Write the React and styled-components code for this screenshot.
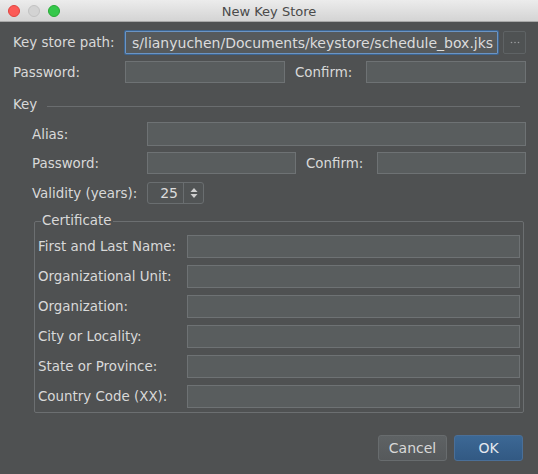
import React from "react";
import styled, { createGlobalStyle } from "styled-components";

const Global = createGlobalStyle`
  html, body { margin: 0; padding: 0; background: #4f5152; }
  * { box-sizing: border-box; }
`;

const Window = styled.div`
  width: 538px;
  height: 474px;
  background: #4f5152;
  display: flex;
  flex-direction: column;
  font-family: "DejaVu Sans", "Liberation Sans", sans-serif;
  font-size: 13.4px;
  color: #d9d9d9;
  overflow: hidden;
`;

const TitleBar = styled.div`
  height: 22px;
  flex: none;
  display: flex;
  align-items: center;
  background: linear-gradient(#ececec, #d4d4d4);
  border-bottom: 1px solid #a8a8a8;
`;

const Lights = styled.div`
  display: flex;
  gap: 8px;
  padding-left: 8px;
`;

const Light = styled.span`
  width: 12px;
  height: 12px;
  border-radius: 50%;
  background: ${(p) => p.$c};
  border: 0.5px solid ${(p) => p.$b};
`;

const Title = styled.div`
  flex: 1;
  text-align: center;
  font-size: 13px;
  color: #4a4a4a;
  margin-right: 60px;
  padding-top: 1px;
`;

const Body = styled.div`
  flex: 1;
  display: flex;
  flex-direction: column;
  padding: 8px 12px 0 13px;
`;

const Row = styled.div`
  display: flex;
  align-items: center;
  height: ${(p) => p.$h || 23}px;
  margin-top: ${(p) => p.$mt || 0}px;
`;

const Label = styled.label`
  width: ${(p) => p.$w}px;
  flex: none;
  white-space: nowrap;
`;

const Input = styled.div`
  height: 100%;
  width: ${(p) => (p.$w ? `${p.$w}px` : "auto")};
  flex: ${(p) => (p.$w ? "none" : 1)};
  background: #595d5e;
  border: 1px solid #6e7274;
  display: flex;
  align-items: center;
  padding: 0 6px;
  font-size: 14px;
  color: #dcdcdc;
  white-space: nowrap;
  overflow: hidden;
`;

const FocusInput = styled(Input)`
  border: 1px solid #6a94c4;
  box-shadow: 0 0 0 1px #3d6591;
  border-radius: 1px;
  background: #565a5c;
`;

const Browse = styled.div`
  width: 23px;
  height: 100%;
  margin-left: 5px;
  border: 1px solid #5f6365;
  border-radius: 2px;
  background: #4f5253;
  display: flex;
  align-items: center;
  justify-content: center;
`;

const Gap = styled.div`
  width: ${(p) => p.$w}px;
  flex: none;
`;

const SectionHead = styled.div`
  display: flex;
  align-items: center;
  height: 16px;
  margin-top: 13px;
`;

const SepLine = styled.div`
  flex: 1;
  height: 1px;
  background: #6a6d6f;
  margin-left: 10px;
  margin-right: 6px;
  margin-top: 4px;
`;

const Indent = styled.div`
  padding-left: 19px;
  display: flex;
  flex-direction: column;
`;

const Spinner = styled.div`
  width: 57px;
  height: 100%;
  display: flex;
  border: 1px solid #6a6e70;
  border-radius: 3px;
  background: #515455;
`;

const SpinValue = styled.div`
  flex: 1;
  display: flex;
  align-items: center;
  justify-content: flex-end;
  padding-right: 5px;
  font-size: 14px;
  color: #dcdcdc;
  border-right: 1px solid #6a6e70;
`;

const SpinArrows = styled.div`
  width: 19px;
  display: flex;
  align-items: center;
  justify-content: center;
`;

const Fieldset = styled.fieldset`
  margin: 10px 2px 0 2px;
  padding: 7px 3px 4px 3px;
  border: 1px solid #6c6f71;
  border-radius: 2px;
  display: flex;
  flex-direction: column;
  gap: 7px;
  min-width: 0;
`;

const Legend = styled.legend`
  padding: 0 1px;
  margin-left: 3px;
  font-size: 13.4px;
  color: #d9d9d9;
  line-height: 14px;
`;

const CertRow = styled.div`
  display: flex;
  align-items: center;
  height: 23px;
`;

const Footer = styled.div`
  display: flex;
  justify-content: flex-end;
  gap: 7px;
  margin-top: 22px;
  padding-right: 3px;
`;

const Button = styled.div`
  width: 69px;
  height: 26px;
  border-radius: 3px;
  display: flex;
  align-items: center;
  justify-content: center;
  font-size: 14px;
  color: ${(p) => (p.$primary ? "#e4e8ee" : "#d8d8d8")};
  background: ${(p) =>
    p.$primary
      ? "linear-gradient(#3c6895, #325983)"
      : "linear-gradient(#5e6264, #56595b)"};
  border: 1px solid ${(p) => (p.$primary ? "#4a6f98" : "#686c6e")};
`;

const certFields = [
  "First and Last Name:",
  "Organizational Unit:",
  "Organization:",
  "City or Locality:",
  "State or Province:",
  "Country Code (XX):",
];

export default function App() {
  return (
    <>
      <Global />
      <Window>
        <TitleBar>
          <Lights>
            <Light $c="#fc5b57" $b="#e0443f" />
            <Light $c="#d3d3d3" $b="#c2c2c2" />
            <Light $c="#35c84b" $b="#27aa35" />
          </Lights>
          <Title>New Key Store</Title>
        </TitleBar>
        <Body>
          <Row $h={23} $mt={1}>
            <Label $w={112}>Key store path:</Label>
            <FocusInput>s/lianyuchen/Documents/keystore/schedule_box.jks</FocusInput>
            <Browse>
              <svg width="10" height="3" viewBox="0 0 10 3">
                <circle cx="1.5" cy="1.5" r="0.8" fill="#9a9c9e" />
                <circle cx="5" cy="1.5" r="0.8" fill="#9a9c9e" />
                <circle cx="8.5" cy="1.5" r="0.8" fill="#9a9c9e" />
              </svg>
            </Browse>
          </Row>
          <Row $h={22} $mt={7}>
            <Label $w={112}>Password:</Label>
            <Input $w={160} />
            <Gap $w={10} />
            <Label $w={71}>Confirm:</Label>
            <Input $w={160} />
          </Row>
          <SectionHead>
            <span>Key</span>
            <SepLine />
          </SectionHead>
          <Indent>
            <Row $h={24} $mt={10}>
              <Label $w={115}>Alias:</Label>
              <Input />
            </Row>
            <Row $h={22} $mt={6}>
              <Label $w={115}>Password:</Label>
              <Input $w={149} />
              <Gap $w={10} />
              <Label $w={71}>Confirm:</Label>
              <Input $w={149} />
            </Row>
            <Row $h={22} $mt={8}>
              <Label $w={115}>Validity (years):</Label>
              <Spinner>
                <SpinValue>25</SpinValue>
                <SpinArrows>
                  <svg width="8" height="12" viewBox="0 0 8 12">
                    <path d="M4 1 L7.5 5 L0.5 5 Z" fill="#d0d0d0" />
                    <path d="M4 11 L7.5 7 L0.5 7 Z" fill="#d0d0d0" />
                  </svg>
                </SpinArrows>
              </Spinner>
            </Row>
            <Fieldset>
              <Legend>Certificate</Legend>
              {certFields.map((f) => (
                <CertRow key={f}>
                  <Label $w={149}>{f}</Label>
                  <Input />
                </CertRow>
              ))}
            </Fieldset>
          </Indent>
          <Footer>
            <Button>Cancel</Button>
            <Button $primary>OK</Button>
          </Footer>
        </Body>
      </Window>
    </>
  );
}
